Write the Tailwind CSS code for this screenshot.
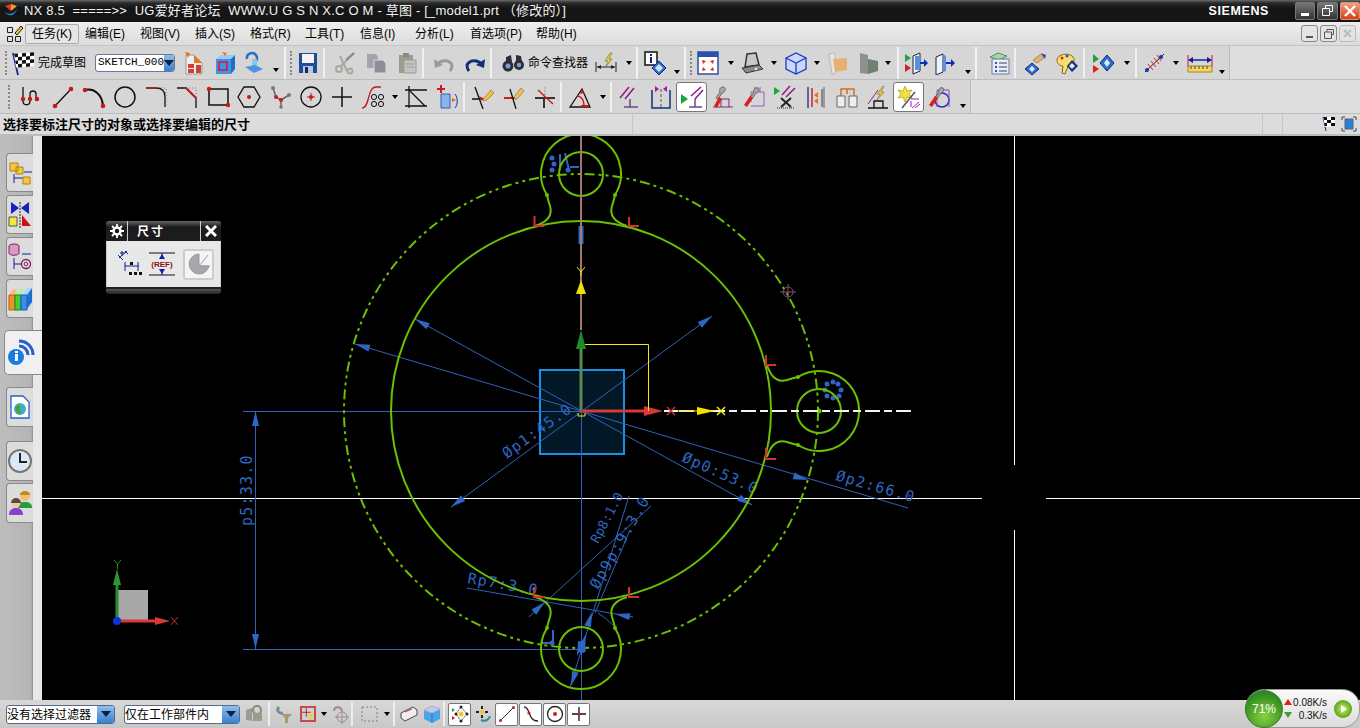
<!DOCTYPE html>
<html>
<head>
    <meta charset="utf-8">
    <title>NX 8.5</title>
    <script src="https://cdn.jsdelivr.net/npm/@tailwindcss/browser@4"></script>
</head>
<body class="w-[1360px] h-[728px] overflow-hidden flex flex-col bg-black text-[12px] text-black font-['Liberation_Sans','Noto_Sans_CJK_SC',sans-serif]">

    <!-- title bar -->
    <div class="h-[22px] flex items-center bg-[linear-gradient(#6a6a6a_0,#2a2a2a_3px,#151515_8px,#151515_100%)] text-[#f2f2f2] shrink-0">
        <svg class="w-4 h-4 ml-[3px]" viewBox="0 0 16 16"><path d="M2 3l6-2 0 7z" fill="#e2342a"/><path d="M8 1l6 2-6 5z" fill="#f0a020"/><path d="M1 8c3 4 9 4 13-2-2 7-9 9-13 2z" fill="#2a7fd8"/></svg>
        <span class="ml-[5px] whitespace-pre text-[13px] tracking-[0.2px]">NX 8.5  =====&gt;&gt;  UG爱好者论坛  WWW.U G S N X.C O M - 草图 - [_model1.prt （修改的）]</span>
        <span class="ml-auto mr-[26px] font-bold text-[12.5px] tracking-[0.6px] text-white">SIEMENS</span>
        <div class="flex gap-[2px] mb-[1px]">
            <div class="w-[20px] h-[18px] rounded-[2px] border border-[#777] bg-[linear-gradient(#777,#333)] flex items-end justify-center pb-[3px]"><i class="w-[8px] h-[3px] bg-white"></i></div>
            <div class="w-[21px] h-[18px] rounded-[2px] border border-[#777] bg-[linear-gradient(#777,#333)] flex items-center justify-center"><svg class="w-[11px] h-[11px]" viewBox="0 0 11 11" fill="none" stroke="#fff"><path d="M3.5 3V.5h7v6H8M.5 3.5h7v7h-7z"/></svg></div>
            <div class="w-[20px] h-[18px] rounded-[2px] border border-[#c98] bg-[linear-gradient(#f0a080,#e03c10)] flex items-center justify-center"><svg class="w-[12px] h-[12px]" viewBox="0 0 12 12" stroke="#fff" stroke-width="2.4"><path d="M1 1l10 10M11 1L1 11"/></svg></div>
        </div>
    </div>

    <!-- menu bar -->
    <div class="h-[24px] flex items-center bg-[linear-gradient(#eeeeee,#dcdcdc)] border-b border-[#c4c4c4] shrink-0">
        <svg class="w-[18px] h-[20px] ml-[6px]" viewBox="0 0 18 20" fill="none" stroke="#222"><path d="M1.500 3.500h5v5h-5zM1.500 12.500h5v5h-5zM9.500 12.500h5v5h-5z"/><path d="M9 9l6-7 2 2-6 7z" fill="#f0c020"/></svg>
        <div class="w-[54px] h-[20px] ml-[1px] flex items-center justify-center rounded-[2px] border border-[#aaa] bg-[#e6e6e6]">任务(K)</div>
        <div class="w-[55px] ml-[6px]">编辑(E)</div>
        <div class="w-[55px]">视图(V)</div>
        <div class="w-[55px]">插入(S)</div>
        <div class="w-[55px]">格式(R)</div>
        <div class="w-[55px]">工具(T)</div>
        <div class="w-[55px]">信息(I)</div>
        <div class="w-[55px]">分析(L)</div>
        <div class="w-[66px]">首选项(P)</div>
        <div class="w-[50px]">帮助(H)</div>
        <div class="ml-auto mr-[4px] flex gap-[2px]">
            <div class="w-[17px] h-[17px] rounded-[3px] border border-[#888] bg-[#e4e4e4] flex items-end justify-center pb-[3px]"><i class="w-[7px] h-[2px] bg-[#555]"></i></div>
            <div class="w-[17px] h-[17px] rounded-[3px] border border-[#888] bg-[#e4e4e4] flex items-center justify-center"><svg class="w-[10px] h-[10px]" viewBox="0 0 10 10" fill="none" stroke="#555"><path d="M3 2.500V.5h6.500v5H8M.5 3h7v6.500h-7z"/></svg></div>
            <div class="w-[17px] h-[17px] rounded-[3px] border border-[#bbb] bg-[#e4e4e4] flex items-center justify-center"><svg class="w-[9px] h-[9px]" viewBox="0 0 9 9" stroke="#bbb" stroke-width="2"><path d="M1 1l7 7M8 1L1 8"/></svg></div>
        </div>
    </div>

    <!-- toolbar row 1 -->
    <div class="h-[34px] flex items-center bg-[#dedede] border-b border-[#bdbdbd] shrink-0">
        <div class="w-[1230px] h-full flex items-center pl-[5px] bg-[#d6d6d6] border-r border-[#bbb]">
            <div class="w-[3px] h-[24px] border-l-2 border-dotted border-[#888]"></div>
            <div class="w-[30px] flex justify-center"><svg class="w-[26px] h-[26px]" viewBox="0 0 26 26"><path d="M3 3l5 22" stroke="#1a2a90" stroke-width="1.800"/><g transform="skewY(-4)"><path d="M4 4h20v14H6z" fill="#fff"/><path d="M4 4h4v3.500H5zM12 4h4v3.500h-4zM20 4h4v3.500h-4zM8 7.500h4V11H8zM16 7.500h4V11h-4zM5 11h3v3.500H6zM12 11h4v3.500h-4zM20 11h4v3.500h-4zM8 14.500h4V18H8zM16 14.500h4V18h-4z" fill="#111"/></g></svg></div>
            <div class="w-[57px]">完成草图</div>
            <div class="w-[80px] h-[18px] rounded-[3px] border border-[#6a7a96] bg-white flex items-center pl-[2px] font-['Liberation_Mono',monospace] text-[11px] overflow-hidden">SKETCH_000<span class="ml-auto w-[15px] h-full bg-[linear-gradient(#8cc0ee,#3a7ed0)] flex items-center justify-center"><i class="border-x-[5px] border-t-[6px] border-x-transparent border-t-[#10203a]"></i></span></div>
            <div class="w-[3px]"></div>
            <div class="w-[31px] flex justify-center"><svg class="w-6 h-6" viewBox="0 0 24 24"><path d="M4 4h8l8 8v11H4z" fill="#eee" stroke="#999"/><path d="M6 13h6v4H6zM14 14h5v8h-5zM6 18h6v4H6z" fill="#d04030"/><path d="M3 1l5 1-2 5zM12 4l8 8h-8z" fill="#e8761a"/></svg></div>
            <div class="w-[31px] flex justify-center"><svg class="w-6 h-6" viewBox="0 0 24 24"><path d="M3 8l5-4h14l-4 4z" fill="#9cc8f4"/><path d="M18 8l4-4v14l-4 5z" fill="#1f6fc8"/><path d="M3 8h15v15H3z" fill="#3d94ea"/><path d="M6 11h8v8H6z" fill="none" stroke="#d81820" stroke-width="1.500"/><path d="M9 1l5 1-2 3z" fill="#e8761a"/></svg></div>
            <div class="w-[28px] flex justify-center"><svg class="w-6 h-6" viewBox="0 0 24 24"><path d="M5 8a5 5 0 1 1 8 3" fill="none" stroke="#2a6fc0" stroke-width="2.500"/><path d="M10 8h5v8h-5z" fill="#8fc0ee"/><path d="M3 16l10-2 8 4-9 4z" fill="#4a94e0"/></svg></div>
            <div class="w-[16px] flex justify-center items-end h-[20px] pb-[1px]"><i class="border-x-[3px] border-t-[4px] border-x-transparent border-t-black"></i></div>
            <div class="w-[6px] h-[32px] border-l-2 border-[#f2f2f2]"></div>
            <div class="w-[3px] h-[24px] border-l-2 border-dotted border-[#888]"></div>
            <div class="w-[30px] flex justify-center"><svg class="w-6 h-6" viewBox="0 0 24 24"><path d="M3 2h18v20H3z" fill="#1e4c96"/><path d="M6 3h12v9H6z" fill="#f4f4f4"/><path d="M7 15h10v7H7z" fill="#b8c8e0"/><path d="M9 16h3v6H9z" fill="#1a2a50"/></svg></div>
            <div class="w-[6px] h-[30px] border-l-2 border-[#f0f0f0]"></div>
            <div class="w-[31px] flex justify-center"><svg class="w-6 h-6" viewBox="0 0 24 24" fill="none" stroke="#a8a8a0" stroke-width="2"><path d="M21 2L8 15M14 20L7 5"/><circle cx="6" cy="18" r="3"/><circle cx="17" cy="20" r="2.500"/><path d="M21 2l-8 7" stroke="#8a8a80"/></svg></div>
            <div class="w-[31px] flex justify-center"><svg class="w-6 h-6" viewBox="0 0 24 24"><path d="M3 3h9l2 3v11H3z" fill="#a4a4ae"/><path d="M10 9h9l3 3v10H10z" fill="#8e8e98" stroke="#ddd"/></svg></div>
            <div class="w-[31px] flex justify-center"><svg class="w-6 h-6" viewBox="0 0 24 24"><path d="M4 4h14v18H4z" fill="#a09a88"/><path d="M8 2h6v4H8z" fill="#888"/><path d="M9 9h12v13H9z" fill="#c4c4c4" stroke="#999"/><path d="M11 13h8M11 16h8" stroke="#999"/></svg></div>
            <div class="w-[6px] h-[30px] border-l-2 border-[#f0f0f0]"></div>
            <div class="w-[31px] flex justify-center"><svg class="w-6 h-6" viewBox="0 0 24 24" fill="none"><path d="M6 13a8 7 0 0 1 14 1c0 3-1 5-2 6" stroke="#9a9a9a" stroke-width="3"/><path d="M2 8l1 9 8-3z" fill="#9a9a9a"/></svg></div>
            <div class="w-[31px] flex justify-center"><svg class="w-6 h-6" viewBox="0 0 24 24" fill="none"><path d="M18 13a8 7 0 0 0-14 1c0 3 1 5 2 6" stroke="#12307a" stroke-width="3"/><path d="M22 8l-1 9-8-3z" fill="#12307a"/></svg></div>
            <div class="w-[8px] h-[30px] border-l-2 border-[#f0f0f0]"></div>
            <div class="w-[30px] flex justify-center"><svg class="w-6 h-6" viewBox="0 0 24 24" fill="#2a2e36"><circle cx="7" cy="15" r="5.500"/><circle cx="18" cy="14" r="5"/><path d="M5 6l5-2 1 7-6 2zM15 4l5 1 1 6-6 1z"/><circle cx="7" cy="15" r="2.500" fill="#7aa0d0"/><circle cx="18" cy="14" r="2.300" fill="#7aa0d0"/></svg></div>
            <div class="w-[63px]">命令查找器</div>
            <div class="w-[30px] flex justify-center"><svg class="w-6 h-6" viewBox="0 0 24 24"><path d="M2 11v10M22 11v10M3 16h18" stroke="#222" fill="none"/><path d="M3 16l4-2v4zM21 16l-4-2v4z" fill="#222"/><path d="M16 2l-5 8h3l-3 7 7-9h-3l3-6z" fill="#f0d020" stroke="#666" stroke-width=".6"/></svg></div>
            <div class="w-[15px] flex justify-center"><i class="border-x-[3px] border-t-[4px] border-x-transparent border-t-black"></i></div>
            <div class="w-[4px] h-[32px] border-l-2 border-[#f2f2f2]"></div>
            <div class="w-[30px] flex justify-center"><svg class="w-6 h-6" viewBox="0 0 24 24"><path d="M2 1h12v13H2z" fill="#fff" stroke="#111" stroke-width="1.500"/><path d="M7 3h2v2H7zM7 6h2v6H7z" fill="#13277a"/><path d="M16 10l7 7-7 7-7-7z" fill="#2a6fd0" stroke="#13277a"/><path d="M16 13l4 4-4 4-4-4z" fill="#cfe4f8"/></svg></div>
            <div class="w-[14px] flex justify-center items-end h-[22px]"><i class="border-x-[3px] border-t-[4px] border-x-transparent border-t-black"></i></div>
            <div class="w-[6px] h-[32px] border-l-2 border-[#f2f2f2]"></div>
            <div class="w-[3px] h-[24px] border-l-2 border-dotted border-[#888]"></div>
            <div class="w-[30px] flex justify-center"><svg class="w-6 h-6" viewBox="0 0 24 24"><path d="M2 1h20v22H2z" fill="#fff" stroke="#2a52a8" stroke-width="1.500"/><path d="M2 1h20v5H2z" fill="#2a52a8"/><path d="M6 9l4 1-3 3zM18 9l-4 1 3 3zM6 20l4-1-3-3zM18 20l-4-1 3-3z" fill="#e03020"/></svg></div>
            <div class="w-[15px] flex justify-center"><i class="border-x-[3px] border-t-[4px] border-x-transparent border-t-black"></i></div>
            <div class="w-[28px] flex justify-center"><svg class="w-6 h-6" viewBox="0 0 24 24"><path d="M7 3l9-1 3 12-14 2z" fill="#c8c8c8" stroke="#333" stroke-width="1.500"/><path d="M2 17l17-3 4 4-17 4z" fill="#8a8a8a" stroke="#333"/><circle cx="16" cy="18" r="1.300" fill="#eee"/></svg></div>
            <div class="w-[16px] flex justify-center"><i class="border-x-[3px] border-t-[4px] border-x-transparent border-t-black"></i></div>
            <div class="w-[28px] flex justify-center"><svg class="w-6 h-6" viewBox="0 0 24 24" fill="#c8d8f8" stroke="#2038c8" stroke-width="1.300"><path d="M2 7l10-5 10 5v11l-10 5-10-5z"/><path d="M2 7l10 5 10-5M12 12v11" fill="none"/></svg></div>
            <div class="w-[14px] flex justify-center"><i class="border-x-[3px] border-t-[4px] border-x-transparent border-t-black"></i></div>
            <div class="w-[26px] flex justify-center"><svg class="w-6 h-6" viewBox="0 0 24 24"><path d="M4 3l6-1 1 20-4 1z" fill="#e4e4e4" stroke="#bbb"/><path d="M8 8l14-1v12l-12 2z" fill="#e8b070"/></svg></div>
            <div class="w-[6px]"></div>
            <div class="w-[26px] flex justify-center"><svg class="w-6 h-6" viewBox="0 0 24 24"><path d="M3 2l8 2v19l-8-1z" fill="#8f8f8f"/><path d="M11 8l10 2v10l-10 3z" fill="#6f8070"/></svg></div>
            <div class="w-[12px] flex justify-center"><i class="border-x-[3px] border-t-[4px] border-x-transparent border-t-black"></i></div>
            <div class="w-[8px] h-[32px] ml-[3px] border-l-2 border-[#f2f2f2]"></div>
            <div class="w-[27px] flex justify-center -ml-[3px]"><svg class="w-6 h-6" viewBox="0 0 24 24"><path d="M1 3l6 4-6 4z" fill="#20a040"/><path d="M1 13l6 4-6 4z" fill="#d82020"/><path d="M9 5l7-3v18l-7 3z" fill="#eef4fc" stroke="#223" /><path d="M11 5h5v14h-5z" fill="#5a90e0"/><path d="M16 11h4V8l4 4-4 4v-3h-4z" fill="#1030b0"/></svg></div>
            <div class="w-[32px] flex justify-center"><svg class="w-6 h-6" viewBox="0 0 24 24"><path d="M3 6l7-3v18l-7 3z" fill="#eef4fc" stroke="#223"/><path d="M10 3l3 2v15l-3 1z" fill="#5a90e0"/><path d="M13 11h5V8l4 4-4 4v-3h-5z" fill="#1030b0"/></svg></div>
            <div class="w-[14px] flex justify-center items-end h-[22px]"><i class="border-x-[3px] border-t-[4px] border-x-transparent border-t-black"></i></div>
            <div class="w-[8px] h-[32px] border-l-2 border-[#f2f2f2]"></div>
            <div class="w-[31px] flex justify-center"><svg class="w-6 h-6" viewBox="0 0 24 24"><path d="M3 6l8-4 9 3-8 4z" fill="#a8d8a0" stroke="#587"/><path d="M5 8h17v15H5z" fill="#e8eef8" stroke="#6a7aa0"/><path d="M8 11h2v2H8zM8 15h2v2H8zM8 19h2v2H8z" fill="#2a5ab0"/><path d="M12 12h8M12 16h8M12 20h8" stroke="#345"/></svg></div>
            <div class="w-[6px] h-[30px] border-l-2 border-[#f0f0f0]"></div>
            <div class="w-[31px] flex justify-center"><svg class="w-6 h-6" viewBox="0 0 24 24"><path d="M9 9l8-6 3 4-7 5z" fill="#e8b070" stroke="#a86"/><path d="M17 2l5 2-1 4z" fill="#2a4ab0"/><path d="M8 12l7 6-7 6-7-6z" fill="#2a6fd0" stroke="#13277a"/><path d="M8 15l3 3-3 3-3-3z" fill="#dcecfa"/></svg></div>
            <div class="w-[32px] flex justify-center"><svg class="w-6 h-6" viewBox="0 0 24 24"><path d="M2 9c0-6 12-8 16-3 3 4 0 9-5 9l-3 8-3-1 1-7C5 15 2 13 2 9z" fill="#f8e070" stroke="#8a6a10"/><circle cx="7" cy="7" r="1.500" fill="#d02020"/><circle cx="12" cy="5" r="1.500" fill="#3050c0"/><path d="M17 9l6 6-6 6-5-6z" fill="#1a2a70"/><path d="M17 12l3 3-3 3-3-3z" fill="#dcecfa"/></svg></div>
            <div class="w-[5px] h-[30px] border-l-2 border-[#f0f0f0]"></div>
            <div class="w-[30px] flex justify-center"><svg class="w-6 h-6" viewBox="0 0 24 24"><path d="M2 3l6 5-6 4z" fill="#20a040"/><path d="M2 14l6 4-6 4z" fill="#d82020"/><path d="M16 4l7 8-7 8-7-8z" fill="#2a6fd0" stroke="#13277a"/><path d="M16 8l3 4-3 4-3-4z" fill="#dcecfa"/></svg></div>
            <div class="w-[17px] flex justify-center"><i class="border-x-[3px] border-t-[4px] border-x-transparent border-t-black"></i></div>
            <div class="w-[4px] h-[30px] border-l-2 border-[#f0f0f0]"></div>
            <div class="w-[30px] flex justify-center"><svg class="w-6 h-6" viewBox="0 0 24 24" stroke="#d02a20" fill="none"><path d="M3 21L22 3" stroke="#222"/><path d="M6 13l5 6M9 10l5 6M12 7l5 6M15 4l4 6"/><circle cx="5" cy="19" r="2" fill="#1a30c0" stroke="none"/><circle cx="19" cy="6" r="2" fill="#1a30c0" stroke="none"/></svg></div>
            <div class="w-[14px] flex justify-center"><i class="border-x-[3px] border-t-[4px] border-x-transparent border-t-black"></i></div>
            <div class="w-[34px] flex justify-center"><svg class="w-[26px] h-6" viewBox="0 0 26 24"><path d="M1 4v12M25 4v12" stroke="#c01818"/><path d="M2 9h22" stroke="#1020a0" stroke-width="1.500"/><path d="M1 9l5-3v6zM25 9l-5-3v6z" fill="#1020a0"/><path d="M1 15h24v6H1z" fill="#f0d860" stroke="#a08820"/><path d="M4 15v3M8 15v3M12 15v3M16 15v3M20 15v3" stroke="#444"/></svg></div>
            <div class="w-[9px] flex justify-center items-end h-[22px]"><i class="border-x-[3px] border-t-[4px] border-x-transparent border-t-black"></i></div>
        </div>
    </div>

    <!-- toolbar row 2 -->
    <div class="h-[34px] flex items-center bg-[#dedede] border-b border-[#bdbdbd] shrink-0">
        <div class="w-[971px] h-full flex items-center pl-[8px] bg-[#d6d6d6] border-r border-[#bbb]">
            <div class="w-[9px] h-[24px] border-l-2 border-dotted border-[#888]"></div>
            <div class="w-[31px] flex justify-center"><svg class="w-6 h-6" viewBox="0 0 24 24" fill="none" stroke="#111" stroke-width="1.300"><path d="M3 2v14c0 5 7 5 7 0V9c0-4 6-4 6 0v7"/><g fill="#c81818" stroke="none"><circle cx="3" cy="14" r="2.200"/><circle cx="10" cy="14" r="2.200"/><circle cx="17" cy="14" r="2.200"/></g></svg></div>
            <div class="w-[31px] flex justify-center"><svg class="w-6 h-6" viewBox="0 0 24 24"><path d="M4 21L20 4" stroke="#111" stroke-width="1.300"/><circle cx="4" cy="21" r="2.300" fill="#c81818"/><circle cx="20" cy="4" r="2.300" fill="#c81818"/></svg></div>
            <div class="w-[31px] flex justify-center"><svg class="w-6 h-6" viewBox="0 0 24 24"><path d="M3 5c9-2 17 4 18 16" stroke="#111" stroke-width="2" fill="none"/><circle cx="3" cy="5" r="2.300" fill="#c81818"/><circle cx="21" cy="21" r="2.300" fill="#c81818"/></svg></div>
            <div class="w-[31px] flex justify-center"><svg class="w-6 h-6" viewBox="0 0 24 24"><circle cx="12" cy="12" r="10" fill="none" stroke="#111" stroke-width="1.500"/></svg></div>
            <div class="w-[31px] flex justify-center"><svg class="w-6 h-6" viewBox="0 0 24 24" fill="none"><path d="M2 3h10c6 0 9 3 9 9v10" stroke="#111" stroke-width="1.300"/><path d="M2 3h20v19" stroke="#777" stroke-dasharray="1 2"/><path d="M2 3h10" stroke="#c81818"/></svg></div>
            <div class="w-[31px] flex justify-center"><svg class="w-6 h-6" viewBox="0 0 24 24" fill="none"><path d="M2 3h9l10 10v10" stroke="#111" stroke-width="1.300"/><path d="M11 3l10 10" stroke="#c81818" stroke-width="2"/><path d="M11 3h10v10" stroke="#777" stroke-dasharray="1 2"/></svg></div>
            <div class="w-[31px] flex justify-center"><svg class="w-6 h-6" viewBox="0 0 24 24"><path d="M3 4h19v16H3z" fill="none" stroke="#111" stroke-width="1.500"/><circle cx="3" cy="4" r="2.200" fill="#c81818"/><circle cx="22" cy="20" r="2.200" fill="#c81818"/></svg></div>
            <div class="w-[31px] flex justify-center"><svg class="w-6 h-6" viewBox="0 0 24 24"><path d="M7 2h10l6 10-6 10H7L1 12z" fill="none" stroke="#111" stroke-width="1.300"/><circle cx="12" cy="12" r="2" fill="#c81818"/></svg></div>
            <div class="w-[31px] flex justify-center"><svg class="w-6 h-6" viewBox="0 0 24 24"><path d="M5 3l3 9 5 3 8-5M13 15l0 7" stroke="#666" stroke-width="1.500" fill="none"/><circle cx="5" cy="3" r="2" fill="#777"/><circle cx="8" cy="12" r="2" fill="#c81818"/><circle cx="13" cy="15" r="2" fill="#c81818"/><circle cx="21" cy="10" r="2" fill="#777"/><circle cx="13" cy="22" r="1.800" fill="#777"/></svg></div>
            <div class="w-[31px] flex justify-center"><svg class="w-6 h-6" viewBox="0 0 24 24"><circle cx="12" cy="12" r="10" fill="none" stroke="#111" stroke-width="1.300"/><path d="M12 8v8M8 12h8" stroke="#c81818"/><circle cx="12" cy="12" r="2" fill="#c81818"/></svg></div>
            <div class="w-[31px] flex justify-center"><svg class="w-6 h-6" viewBox="0 0 24 24"><path d="M12 2v20M2 12h20" stroke="#111" stroke-width="1.500"/></svg></div>
            <div class="w-[31px] flex justify-center"><svg class="w-6 h-6" viewBox="0 0 24 24" fill="none"><path d="M1 23c8 0 5-21 14-21h5" stroke="#c81818" stroke-width="1.300"/><g stroke="#111"><circle cx="13" cy="12" r="2.600"/><circle cx="20" cy="12" r="2.600"/><circle cx="13" cy="19" r="2.600"/><circle cx="20" cy="19" r="2.600"/></g></svg></div>
            <div class="w-[12px] flex justify-center"><i class="border-x-[3px] border-t-[4px] border-x-transparent border-t-black"></i></div>
            <div class="w-[31px] flex justify-center"><svg class="w-6 h-6" viewBox="0 0 24 24" fill="none" stroke="#111" stroke-width="1.300"><path d="M1 5h22M5 1v22M1 21h22"/><path d="M5 5l16 16" /></svg></div>
            <div class="w-[31px] flex justify-center"><svg class="w-6 h-6" viewBox="0 0 24 24"><path d="M6 0v8M2 4h8" stroke="#d81818" stroke-width="2"/><path d="M6 9h9v14H6z" fill="#8ab4ec" stroke="#3a5ea8"/><path d="M17 13l4 2-4 2z" fill="#e86a18"/><path d="M20 9c3 4 3 10 0 14" stroke="#2030a0" fill="none"/></svg></div>
            <div class="w-[5px] h-[30px] border-l-2 border-[#f0f0f0]"></div>
            <div class="w-[31px] flex justify-center"><svg class="w-6 h-6" viewBox="0 0 24 24"><path d="M4 2l8 22M1 14h14" stroke="#111" stroke-width="1.300"/><path d="M13 13l7-8 3 3-7 7-4 1z" fill="#f4c040" stroke="#a86"/><path d="M8 11l4 2-2 3z" fill="#d81818"/></svg></div>
            <div class="w-[31px] flex justify-center"><svg class="w-6 h-6" viewBox="0 0 24 24"><path d="M2 13h12M8 4l6 20" stroke="#111" stroke-width="1.300"/><path d="M12 12l7-9 3 3-8 9z" fill="#f4c040" stroke="#a86"/><path d="M2 13h7" stroke="#d81818" stroke-width="2"/></svg></div>
            <div class="w-[31px] flex justify-center"><svg class="w-6 h-6" viewBox="0 0 24 24"><path d="M2 13h20M11 13v10" stroke="#333" stroke-width="2"/><path d="M12 2v9" stroke="#999" stroke-dasharray="2 1"/><path d="M5 5l15 14" stroke="#d81818" stroke-width="1.500"/></svg></div>
            <div class="w-[4px] h-[30px] border-l-2 border-[#f0f0f0]"></div>
            <div class="w-[31px] flex justify-center"><svg class="w-6 h-6" viewBox="0 0 24 24" fill="none"><path d="M2 22L14 4l8 18z" stroke="#111" stroke-width="1.300"/><path d="M9 11c4 0 7 4 7 9" stroke="#c81818" stroke-width="1.500"/><path d="M14 4l-2 5 4-1z" fill="#c81818"/><path d="M13 21h8" stroke="#c81818" stroke-width="2"/></svg></div>
            <div class="w-[15px] flex justify-center"><i class="border-x-[3px] border-t-[4px] border-x-transparent border-t-black"></i></div>
            <div class="w-[4px] h-[30px] border-l-2 border-[#f0f0f0]"></div>
            <div class="w-[31px] flex justify-center"><svg class="w-6 h-6" viewBox="0 0 24 24"><path d="M2 13L11 2M7 14L16 3" stroke="#8a1a88" stroke-width="1.500"/><path d="M12 14v8M6 22h14" stroke="#6a4a8a" stroke-width="1.500"/></svg></div>
            <div class="w-[31px] flex justify-center"><svg class="w-6 h-6" viewBox="0 0 24 24"><path d="M3 5v18h18V5" fill="none" stroke="#12307a" stroke-width="1.500"/><path d="M12 4v19" stroke="#555" stroke-dasharray="3 2"/><path d="M6 1l4 3-4 3zM18 1l-4 3 4 3z" fill="#b010b0"/></svg></div>
            <div class="w-[31px] h-[30px] flex items-center justify-center rounded-[3px] border border-[#777] bg-white"><svg class="w-6 h-6" viewBox="0 0 24 24"><path d="M1 9l7 5-7 5z" fill="#18a838"/><path d="M11 11L21 2M15 14L23 5" stroke="#8a1a88" stroke-width="1.500"/><path d="M15 14v8M9 22h13" stroke="#6a4a8a" stroke-width="1.500"/></svg></div>
            <div class="w-[31px] flex justify-center"><svg class="w-6 h-6" viewBox="0 0 24 24"><path d="M10 14V22M2 22h20M10 14h8v8" stroke="#7a2a7a" fill="none"/><path d="M12 2c4 0 2 6-1 6l-4 6-2-1 4-6c-1-2 0-5 3-5z" fill="#aaa" stroke="#666"/><path d="M3 21l5-9 3 2-5 9z" fill="#d82020"/></svg></div>
            <div class="w-[31px] flex justify-center"><svg class="w-6 h-6" viewBox="0 0 24 24"><path d="M9 17V7h13v14H9M13 2v6M18 2v5" stroke="#9a5ac0" fill="none"/><path d="M16 3c2 1 0 5-2 5l-4 6-2-1 4-6c-1-2 1-5 4-4z" fill="#aaa" stroke="#666"/><path d="M2 20l6-9 3 2-6 9z" fill="#d82020"/></svg></div>
            <div class="w-[31px] flex justify-center"><svg class="w-6 h-6" viewBox="0 0 24 24"><path d="M1 2l6 4-6 4z" fill="#18a838"/><path d="M9 10L17 1M13 12L22 3" stroke="#8a1a88" stroke-width="1.500"/><path d="M8 13l10 9M18 13L8 22" stroke="#222" stroke-width="2"/><path d="M4 23h18" stroke="#222" stroke-dasharray="1 1"/></svg></div>
            <div class="w-[31px] flex justify-center"><svg class="w-6 h-6" viewBox="0 0 24 24"><path d="M4 2v21M20 2v21" stroke="#888" stroke-width="1.500"/><path d="M4 2v21" stroke="#2030a0"/><path d="M8 3v19" stroke="#d02020" stroke-width="1.500"/><path d="M14 7l-4 3 4 3zM14 13l-4 3 4 3z" fill="#e87020"/><path d="M18 4v18" stroke="#888" stroke-width="2"/></svg></div>
            <div class="w-[31px] flex justify-center"><svg class="w-6 h-6" viewBox="0 0 24 24" fill="#eee" stroke="#666"><path d="M2 11h8v11H2zM14 11h8v11h-8z"/><path d="M6 11V4h6v5M12 4h7v7" fill="none" stroke="#d07020" stroke-width="1.500"/></svg></div>
            <div class="w-[31px] flex justify-center"><svg class="w-6 h-6" viewBox="0 0 24 24"><path d="M2 23h20M8 23V16h9v7" stroke="#111" fill="none" stroke-width="1.300"/><path d="M2 19L12 5" stroke="#7a2a7a"/><path d="M17 1l-6 8h3l-3 6 7-8h-3l3-6z" fill="#f0d020" stroke="#666" stroke-width=".6"/></svg></div>
            <div class="w-[31px] h-[30px] flex items-center justify-center rounded-[3px] border border-[#777] bg-white"><svg class="w-6 h-6" viewBox="0 0 24 24"><path d="M8 1l2 5 5-1-3 4 3 4-5-1-2 5-2-5-5 1 3-4-3-4 5 1z" fill="#f4e040" stroke="#b09a10" stroke-width=".7"/><path d="M5 23L18 7" stroke="#555" stroke-width="1.500"/><path d="M14 16v6M14 14h8M15 23l7-6M18 23l5-4" stroke="#b010b0"/></svg></div>
            <div class="w-[31px] flex justify-center"><svg class="w-6 h-6" viewBox="0 0 24 24"><circle cx="14" cy="15" r="7" fill="none" stroke="#2030c0" stroke-width="1.500"/><path d="M9 22V5h12v17M13 2v4" stroke="#a040b0" fill="none"/><path d="M15 3c2 1 0 5-2 5l-4 6-2-1 4-6c-1-2 1-5 4-4z" fill="#aaa" stroke="#666"/><path d="M1 20l6-9 3 2-6 9z" fill="#d82020"/></svg></div>
            <div class="w-[15px] flex justify-center items-end h-[22px]"><i class="border-x-[3px] border-t-[4px] border-x-transparent border-t-black"></i></div>
        </div>
    </div>

    <!-- status line -->
    <div class="h-[22px] flex items-center bg-[#dcdcdc] border-b-2 border-[#bcbcbc] shrink-0">
        <div class="w-[632px] pl-[3px] font-bold text-[13px] font-['Noto_Sans_CJK_SC',sans-serif]">选择要标注尺寸的对象或选择要编辑的尺寸</div>
        <div class="w-[630px] h-full border-l border-[#c6c6c6]"></div>
        <div class="w-[20px] h-full border-l border-[#c6c6c6]"></div>
        <div class="flex-1 h-full border-l border-[#c6c6c6] flex items-center justify-end gap-[5px] pr-[3px]">
            <svg class="w-4 h-4" viewBox="0 0 16 16"><path d="M3 1l3 14" stroke="#1a2a90"/><path d="M3 1l12 0 0 9-10 1z" fill="#fff"/><path d="M3 1h4v3H4zM11 1h4v3h-4zM7 4h4v3H7zM4 7h3v3H5zM11 7h4v3h-4z" fill="#111"/></svg>
            <svg class="w-4 h-4" viewBox="0 0 16 16"><path d="M4 3h8v10H4z" fill="#2a7fd8" stroke="#567"/><path d="M1 4V1h3M12 1h3v3M15 12v3h-3M4 15H1v-3" fill="none" stroke="#444"/></svg>
        </div>
    </div>

    <!-- work area -->
    <div class="flex-1 flex min-h-0 relative">
        <div class="w-[42px] h-full shrink-0 pt-[17px] bg-[linear-gradient(to_right,#bebebe_0,#b4b4b4_31px,#8c8c8c_33px,#e8e8e8_33px)]">
            <div class="w-[27px] h-[39px] ml-[6px] flex items-center justify-center rounded-l-[4px] border border-r-0 border-[#8a8a8a] bg-[#dcdcdc]"><svg class="w-[24px] h-[26px]" viewBox="0 0 24 26"><path d="M2 3h8v8H2zM8 7h7v7H8z" fill="#f4c840" stroke="#b08010"/><path d="M16 12h8M6 14v9M6 18h10" stroke="#12209a" fill="none"/><path d="M15 17h7v7h-7z" fill="#f4c840" stroke="#b08010"/></svg></div>
            <div class="w-[27px] h-[39px] ml-[6px] mt-[3px] flex items-center justify-center rounded-l-[4px] border border-r-0 border-[#8a8a8a] bg-[#dcdcdc]"><svg class="w-[24px] h-[28px]" viewBox="0 0 24 28"><path d="M3 1l8 6-8 6zM21 1l-8 6 8 6z" fill="#1420c0"/><path d="M12 1v26" stroke="#222" stroke-dasharray="2 1"/><path d="M1 16h8v9H1z" fill="#f0e840" stroke="#555"/><path d="M14 14l9 11h-9z" fill="#d01010"/></svg></div>
            <div class="w-[27px] h-[39px] ml-[6px] mt-[3px] flex items-center justify-center rounded-l-[4px] border border-r-0 border-[#8a8a8a] bg-[#dcdcdc]"><svg class="w-[24px] h-[28px]" viewBox="0 0 24 28" fill="none"><ellipse cx="6" cy="3" rx="5" ry="2" fill="#d89ac0" stroke="#802060"/><path d="M1 3v7c0 3 10 3 10 0V3" fill="#d89ac0" stroke="#802060"/><path d="M14 11h9M6 15v11M6 21h8" stroke="#12209a"/><circle cx="18" cy="21" r="4.500" stroke="#802060" stroke-width="1.300"/><circle cx="18" cy="21" r="1.800" stroke="#802060"/></svg></div>
            <div class="w-[27px] h-[39px] ml-[6px] mt-[3px] flex items-center justify-center rounded-l-[4px] border border-r-0 border-[#8a8a8a] bg-[#dcdcdc]"><svg class="w-[24px] h-[24px]" viewBox="0 0 24 24"><path d="M1 8l4-6h4L7 8z" fill="#f8c080"/><path d="M1 8h6v15H1z" fill="#f09030" stroke="#c05a00"/><path d="M7 8l5-6h4l-3 6z" fill="#b0f0a0"/><path d="M7 8h6v15H7z" fill="#40d030" stroke="#188a10"/><path d="M13 8l6-7h5l-5 7z" fill="#b0d8ff"/><path d="M13 8h6v15h-6z" fill="#3a90e8" stroke="#1a5aa8"/><path d="M19 8l5-7v14l-5 7z" fill="#1e6ed0"/></svg></div>
            <div class="w-[38px] h-[45px] ml-[4px] mt-[12px] flex items-center pl-[2px] rounded-l-[5px] border border-r-0 border-[#8a8a8a] bg-[#f0f0f0]"><svg class="w-[28px] h-[28px]" viewBox="0 0 28 28" fill="none"><path d="M12 2c8 0 14 6 14 14M12 7c5 0 9 4 9 9" stroke="#2a5ec8" stroke-width="3"/><circle cx="9" cy="18" r="8" fill="#1a7ce0"/><path d="M8 12h3v2H8zM8 15h3v7H8z" fill="#fff"/></svg></div>
            <div class="w-[27px] h-[40px] ml-[6px] mt-[12px] flex items-center justify-center rounded-l-[4px] border border-r-0 border-[#8a8a8a] bg-[#dcdcdc]"><svg class="w-[20px] h-[24px]" viewBox="0 0 20 24"><path d="M1 1h12l6 6v16H1z" fill="#fff" stroke="#2a5ec8" stroke-width="1.300"/><circle cx="10" cy="14" r="6" fill="#3ab0c8"/><path d="M6 11c3-2 5 0 4 3s2 3 0 5c-3 0-5-4-4-8z" fill="#50a030"/></svg></div>
            <div class="w-[27px] h-[40px] ml-[6px] mt-[14px] flex items-center justify-center rounded-l-[4px] border border-r-0 border-[#8a8a8a] bg-[#dcdcdc]"><svg class="w-[24px] h-[24px]" viewBox="0 0 24 24"><circle cx="12" cy="12" r="11" fill="#dbe8f8" stroke="#777" stroke-width="2"/><path d="M11 4h2v8h6v2h-8z" fill="#222"/></svg></div>
            <div class="w-[27px] h-[40px] ml-[6px] mt-[2px] flex items-center justify-center rounded-l-[4px] border border-r-0 border-[#8a8a8a] bg-[#dcdcdc]"><svg class="w-[25px] h-[26px]" viewBox="0 0 25 26"><circle cx="17" cy="6" r="5" fill="#f0c070"/><path d="M17 1a5 4 0 0 1 5 4H12a5 4 0 0 1 5-4z" fill="#c08a20"/><path d="M10 18c0-5 3-6 7-6s7 1 7 6z" fill="#2a9a3a"/><circle cx="8" cy="13" r="4.500" fill="#f0c8a0"/><path d="M8 8a5 5 0 0 1 5 5H3a5 5 0 0 1 5-5z" fill="#5a4a40"/><path d="M1 25c0-5 3-7 7-7s7 2 7 7z" fill="#8a40c8"/></svg></div>
        </div>

        <!-- sketch view -->
        <svg class="block flex-1 h-full bg-black" viewBox="42 136 1318 564" width="1318" height="564" fill="none" font-family="'DejaVu Sans Mono',monospace">
            <defs>
                <path id="ah" d="M0 0L-15-3.500V3.500Z" fill="#2f66c4"/>
                <g id="lug" stroke="#6cc000" stroke-width="2">
                    <circle r="22"/>
                    <path d="M-46 52Q-27 46-31 32Q-33 26-34 21A40 40 0 1 1 34 21Q33 26 31 32Q27 46 46 52"/>
                    <circle cx="-34" cy="21" r="2" fill="#6cc000" stroke="none"/>
                    <circle cx="34" cy="21" r="2" fill="#6cc000" stroke="none"/>
                </g>
            </defs>

            <!-- crosshair -->
            <path d="M1014.500 136V465M1014.500 530V700M42 498.500H982M1046 498.500H1360" stroke="#fff"/>

            <!-- datum square -->
            <rect x="540" y="370" width="84" height="84" fill="#021826" stroke="#1a8fe6" stroke-width="2"/>

            <!-- blue dimension lines -->
            <g stroke="#2f62b8">
                <path d="M243 411.500H581M581.500 411V700M243 649.500H582M255.500 411V649"/>
                <path d="M712 316L451 507M415 319L752 505M355 344L908 508"/>
                <path d="M467 588L633 617M529 617L651 506M629 496L570 687M630 530L595 613M598 613Q606 618 613 625"/>
            </g>
            <path d="M581 226V244" stroke="#2f66c4" stroke-width="5"/>
            <path d="M553 630V643M541 643H553M560 154V170M565 153L569 170M570 167H579" stroke="#2f66c4" stroke-width="2"/>
            <g fill="#2f66c4">
                <circle cx="552" cy="158" r="2.500"/><circle cx="554" cy="164" r="2.500"/><circle cx="552" cy="170" r="2.500"/><circle cx="568" cy="170" r="2.500"/><circle cx="552" cy="643" r="2.500"/>
                <circle cx="827" cy="384" r="2.500"/><circle cx="833" cy="382" r="2.500"/><circle cx="838" cy="384" r="2.500"/><circle cx="841" cy="390" r="2.500"/><circle cx="839" cy="396" r="2.500"/><circle cx="833" cy="398" r="2.500"/><circle cx="827" cy="396" r="2.500"/><circle cx="825" cy="390" r="2.500"/>
            </g>
            <use href="#ah" transform="translate(255.500 411) rotate(-90)"/>
            <use href="#ah" transform="translate(255.500 649) rotate(90)"/>
            <use href="#ah" transform="translate(712 316) rotate(-36)"/>
            <use href="#ah" transform="translate(451 507) rotate(144)"/>
            <use href="#ah" transform="translate(415 319) rotate(209)"/>
            <use href="#ah" transform="translate(752 505) rotate(29)"/>
            <use href="#ah" transform="translate(355 344) rotate(196)"/>
            <use href="#ah" transform="translate(808 480) rotate(16)"/>
            <use href="#ah" transform="translate(571 686) rotate(107)"/>
            <use href="#ah" transform="translate(577 656) rotate(107)"/>
            <use href="#ah" transform="translate(592 612) rotate(-73)"/>
            <use href="#ah" transform="translate(586 634) rotate(-73)"/>
            <use href="#ah" transform="translate(545 602) rotate(-42)"/>
            <use href="#ah" transform="translate(615 614) rotate(190)"/>

            <!-- dimension texts -->
            <g fill="#2f66c4" font-size="15" letter-spacing="1.200">
                <text transform="translate(252 526) rotate(-90)">p5:33.0</text>
                <text transform="translate(507 459) rotate(-36)">Øp1:45.0</text>
                <text transform="translate(681 461) rotate(24)">Øp0:53.0</text>
                <text transform="translate(835 480) rotate(16)">Øp2:66.0</text>
                <text transform="translate(467 583) rotate(10)">Rp7:3.0</text>
                <text transform="translate(598 590) rotate(-60)" letter-spacing="1.400">Øp9p:9:3.0</text>
                <text transform="translate(598 544) rotate(-62)" font-size="13" letter-spacing="0">Rp8:1.0</text>
            </g>

            <!-- sketch geometry -->
            <circle cx="581" cy="411" r="190" stroke="#6cc000" stroke-width="2"/>
            <circle cx="581" cy="411" r="237" stroke="#6cc000" stroke-width="2" stroke-dasharray="10 4 3 4 3 4"/>
            <use href="#lug" transform="translate(581 174)"/>
            <use href="#lug" transform="translate(819 411) rotate(90)"/>
            <use href="#lug" transform="translate(581 649) rotate(180)"/>
            <circle cx="819" cy="411" r="2.500" fill="#6cc000"/>
            <circle cx="582" cy="649" r="4" fill="#2f66c4"/>

            <!-- constraint marks -->
            <path d="M534.500 216V226H544M629 217V226H639M766 355V365H776M766 448V459H776M534 587V597H545M629 587V597H639" stroke="#d83030" stroke-width="2"/>
            <circle cx="788" cy="292" r="5" stroke="#2f66c4"/>
            <path d="M788 284V300M780 292H796" stroke="#c04040"/>

            <!-- wcs -->
            <path d="M581 136V330" stroke="#a07a70" stroke-width="2"/>
            <path d="M581 411V345" stroke="#5a8a50" stroke-width="3"/>
            <path d="M581 330L576 349H586Z" fill="#1f8a2a"/>
            <path d="M664 411H678" stroke="#f4f4f4" stroke-width="2"/>
            <path d="M679 411H911" stroke="#f4f4f4" stroke-width="2" stroke-dasharray="15 4 8 4"/>
            <path d="M581 411H645" stroke="#d83838" stroke-width="3"/>
            <path d="M663 411L644 406V416Z" fill="#d83838"/>
            <path d="M667 407L675 415M675 407L667 415" stroke="#c83030" stroke-width="1.500"/>
            <path d="M585 344.500H648.500V411" stroke="#f0f000"/>
            <path d="M677 411H700" stroke="#f0f000"/>
            <path d="M715 411L697 407V415Z" fill="#f0e000"/>
            <path d="M717 407L725 415M725 407L717 415" stroke="#f0f000" stroke-width="1.500"/>
            <path d="M578 413V416H585V413" stroke="#f0f000"/>
            <path d="M581 280L576 294H586Z" fill="#f0e000"/>
            <path d="M577 267L581 272L585 267M581 272V276" stroke="#f0f000"/>

            <!-- triad -->
            <rect x="117" y="590" width="31" height="31" fill="#a8a8a8"/>
            <path d="M117 621V585" stroke="#2a8a30" stroke-width="3"/>
            <path d="M117 569L113 585H121Z" fill="#2a9a30"/>
            <path d="M117 621H157" stroke="#d83838" stroke-width="3"/>
            <path d="M170 621L155 617V625Z" fill="#d83838"/>
            <circle cx="117" cy="621" r="4" fill="#1030d8"/>
            <path d="M171 617L178 625M178 617L171 625" stroke="#b83030"/>
            <path d="M114 560L117.500 564L121 560M117.500 564V569" stroke="#2a8a30"/>
        </svg>

        <!-- floating palette -->
        <div class="absolute left-[106px] top-[85px] w-[115px] rounded-[3px] overflow-hidden">
            <div class="h-[20px] flex items-center bg-[linear-gradient(#666,#1c1c1c_6px)] text-white font-bold">
                <div class="w-[21px] flex justify-center"><svg class="w-[14px] h-[14px]" viewBox="0 0 14 14" fill="none" stroke="#fff"><circle cx="7" cy="7" r="3.500" stroke-width="2.500"/><path d="M7 0v3M7 11v3M0 7h3M11 7h3M2 2l2 2M10 10l2 2M12 2l-2 2M4 10l-2 2" stroke-width="1.800"/></svg></div>
                <div class="w-[74px] h-full border-x border-[#ccc] pl-[9px] flex items-center font-['Noto_Sans_CJK_SC',sans-serif] tracking-[2px]">尺寸</div>
                <div class="flex-1 flex justify-center"><svg class="w-[12px] h-[12px]" viewBox="0 0 12 12" stroke="#fff" stroke-width="3"><path d="M1 1l10 10M11 1L1 11"/></svg></div>
            </div>
            <div class="h-[46px] flex items-center bg-[#e8e8e8] pl-[10px] border-x border-[#ccc]">
                <svg class="w-[28px] h-[28px]" viewBox="0 0 28 28" fill="none" stroke="#12209a"><path d="M2 8L10 1M1 5l5 5M8 1l3 3M3 3h5M5 1v5"/><path d="M8 16h14M8 12v9M21 12v9"/><path d="M13 12h3v3h-3zM12 22h3v3h-3zM17 22h3v3h-3zM22 22h3v3h-3z" fill="#111" stroke="none"/></svg>
                <svg class="w-[28px] h-[28px] ml-[3px]" viewBox="0 0 28 28" fill="none"><path d="M1 3h26M1 25h26" stroke="#111"/><path d="M14 3v5M14 20v5" stroke="#12209a"/><path d="M14 4l-3 5h6zM14 24l-3-5h6z" fill="#12209a"/><text x="14" y="17" text-anchor="middle" font-size="8" font-weight="700" fill="#8a1010" font-family="'Liberation Sans',sans-serif">(REF)</text></svg>
                <div class="ml-[7px] w-[31px] h-[31px] rounded-[3px] border-2 border-[#ccc] bg-[#f4f4f4] flex items-center justify-center"><svg class="w-[24px] h-[24px]" viewBox="0 0 24 24"><path d="M12 2a10 10 0 1 0 10 12H12z" fill="#a8a8a8" stroke="#999"/><path d="M12 14L21 3M12 14h11" stroke="#9a9ab8"/></svg></div>
            </div>
            <div class="h-[7px] border-t-2 border-[#222] bg-[linear-gradient(#555,#222)]"></div>
        </div>
    </div>

    <!-- selection bar -->
    <div class="h-[28px] flex items-center bg-[linear-gradient(#d8d8d8,#c8c8c8)] pl-[6px] shrink-0">
        <div class="w-[109px] h-[19px] rounded-[3px] border border-[#5a6a86] bg-white flex items-center overflow-hidden font-['Noto_Sans_CJK_SC',sans-serif]">没有选择过滤器<span class="ml-auto w-[17px] h-full bg-[linear-gradient(#8cc0ee,#3a7ed0)] flex items-center justify-center"><i class="border-x-[5px] border-t-[6px] border-x-transparent border-t-[#10203a]"></i></span></div>
        <div class="w-[116px] h-[19px] ml-[9px] rounded-[3px] border border-[#5a6a86] bg-white flex items-center overflow-hidden font-['Noto_Sans_CJK_SC',sans-serif]">仅在工作部件内<span class="ml-auto w-[17px] h-full bg-[linear-gradient(#8cc0ee,#3a7ed0)] flex items-center justify-center"><i class="border-x-[5px] border-t-[6px] border-x-transparent border-t-[#10203a]"></i></span></div>
        <div class="w-[28px] flex justify-center"><svg class="w-[20px] h-[20px]" viewBox="0 0 20 20" fill="#9a9a9a"><path d="M2 6l6-2v13l-6-1z"/><circle cx="13" cy="6" r="4" fill="none" stroke="#8a8a7a" stroke-width="2"/><path d="M9 9h9v8H9z" fill="#a09a88"/></svg></div>
        <div class="w-[5px] h-[24px] border-l-2 border-[#eee]"></div>
        <div class="w-[24px] flex justify-center"><svg class="w-[20px] h-[20px]" viewBox="0 0 20 20"><path d="M4 3c-3 3 0 7 4 6" fill="none" stroke="#7a8a9a" stroke-width="3"/><path d="M6 10h11l-4 4v5H10v-5z" fill="#a89a70"/></svg></div>
        <div class="w-[16px] h-[16px] mx-[3px] border-2 border-[#c84850] flex items-center justify-center"><svg class="w-[14px] h-[14px]" viewBox="0 0 14 14"><path d="M5 0v10M0 5h10" stroke="#a01818"/><path d="M6 7h8l-3 3v4H9v-4z" fill="#f0d020"/></svg></div>
        <div class="w-[9px] flex justify-center"><i class="border-x-[3px] border-t-[4px] border-x-transparent border-t-black"></i></div>
        <div class="w-[23px] flex justify-center"><svg class="w-[20px] h-[20px]" viewBox="0 0 20 20" fill="none" stroke="#a08a8a"><path d="M4 7c0-5 7-5 8 0" stroke-width="2"/><circle cx="12" cy="13" r="5"/><path d="M12 6v14M5 13h14"/></svg></div>
        <div class="w-[6px] h-[24px] border-l-2 border-[#eee]"></div>
        <div class="w-[24px] flex justify-center"><svg class="w-[20px] h-[20px]" viewBox="0 0 20 20" fill="none"><path d="M3 3h15v14H3z" stroke="#8a7a7a" stroke-dasharray="2 2"/></svg></div>
        <div class="w-[12px] flex justify-center"><i class="border-x-[3px] border-t-[4px] border-x-transparent border-t-black"></i></div>
        <div class="w-[4px] h-[24px] border-l-2 border-[#eee]"></div>
        <div class="w-[23px] flex justify-center"><svg class="w-[20px] h-[20px]" viewBox="0 0 20 20"><path d="M2 9l12-6 4 3v5L6 17l-4-3z" fill="#eee" stroke="#444"/><path d="M6 8l7-3" stroke="#d04040"/></svg></div>
        <div class="w-[23px] flex justify-center"><svg class="w-[20px] h-[20px]" viewBox="0 0 20 20"><path d="M2 6l7-4 9 3v10l-8 4-8-4z" fill="#4aa4ec"/><path d="M2 6l8 3 8-4-8-3z" fill="#a8d4f8" stroke="#d8a0b0"/><path d="M10 9v10" stroke="#2a78c8"/></svg></div>
        <div class="w-[5px] h-[24px] border-l-2 border-[#eee]"></div>
        <div class="flex gap-[1px]">
            <div class="w-[23px] h-[23px] rounded-[2px] border border-[#777] bg-white flex items-center justify-center"><svg class="w-[18px] h-[18px]" viewBox="0 0 18 18"><path d="M1 3l3 2-3 2z" fill="#18a838"/><path d="M1 11l3 2-3 2z" fill="#d81818"/><path d="M10 2l6 7-6 7-5-7z" fill="none" stroke="#555" stroke-dasharray="2 1"/><circle cx="10" cy="9" r="2.500" fill="#f0c820"/><circle cx="10" cy="2" r="1.500" fill="#222"/><circle cx="16" cy="9" r="1.500" fill="#222"/><circle cx="10" cy="16" r="1.500" fill="#222"/><circle cx="5" cy="9" r="1.500" fill="#222"/></svg></div>
            <div class="w-[22px] h-[23px] flex items-center justify-center"><svg class="w-[18px] h-[18px]" viewBox="0 0 18 18"><circle cx="8" cy="7" r="2" fill="#f0c820"/><path d="M8 1v3M8 10v3M2 7h3M11 7h3" stroke="#222" stroke-width="2"/><path d="M7 15c4 2 8 0 9-4" fill="none" stroke="#2a90a0" stroke-width="2"/></svg></div>
            <div class="w-[23px] h-[23px] rounded-[2px] border border-[#777] bg-white flex items-center justify-center"><svg class="w-[18px] h-[18px]" viewBox="0 0 18 18"><path d="M2 16L16 2" stroke="#333"/><circle cx="2.500" cy="15.500" r="1.500" fill="#d81818"/><circle cx="15.500" cy="2.500" r="1.500" fill="#d81818"/></svg></div>
            <div class="w-[23px] h-[23px] rounded-[2px] border border-[#777] bg-white flex items-center justify-center"><svg class="w-[18px] h-[18px]" viewBox="0 0 18 18"><path d="M2 2c7 0 3 14 14 14" fill="none" stroke="#222" stroke-width="1.300"/><circle cx="7" cy="8" r="1.600" fill="#d81818"/></svg></div>
            <div class="w-[23px] h-[23px] rounded-[2px] border border-[#777] bg-white flex items-center justify-center"><svg class="w-[18px] h-[18px]" viewBox="0 0 18 18"><circle cx="9" cy="9" r="7.500" fill="none" stroke="#222" stroke-width="1.300"/><circle cx="9" cy="9" r="2" fill="#d81818"/></svg></div>
            <div class="w-[23px] h-[23px] rounded-[2px] border border-[#777] bg-white flex items-center justify-center"><svg class="w-[18px] h-[18px]" viewBox="0 0 18 18"><path d="M9 2v14M2 9h14" stroke="#111" stroke-width="1.300"/><circle cx="9" cy="9" r="1.500" fill="#d81818"/></svg></div>
        </div>
    </div>

    <!-- network meter -->
    <div class="absolute left-[1245px] top-[689px] w-[115px] h-[39px] rounded-l-[20px] rounded-r-[18px] border border-[#999] bg-[linear-gradient(#fafafa,#dcdcdc)] flex items-center">
        <div class="w-[38px] h-[38px] -ml-px rounded-full border border-[#3a7a20] bg-[radial-gradient(circle_at_50%_70%,#8ad040,#2a8a20_75%)] text-white text-[12px] flex items-center justify-center">71%</div>
        <div class="w-[44px] ml-[1px] text-[10px] leading-[13px] text-[#111] font-['Liberation_Sans',sans-serif]">
            <div class="flex items-center justify-between w-[43px]"><i class="border-x-[4px] border-b-[6px] border-x-transparent border-b-[#e02020]"></i><span>0.08K/s</span></div>
            <div class="flex items-center justify-between w-[43px]"><i class="border-x-[4px] border-t-[6px] border-x-transparent border-t-[#4a9a30]"></i><span>0.3K/s</span></div>
        </div>
        <div class="ml-[6px] w-[18px] h-[18px] rounded-full bg-[radial-gradient(circle_at_50%_50%,#d0f070,#50a010_75%)] flex items-center justify-center"><i class="ml-[2px] border-y-[4px] border-l-[6px] border-y-transparent border-l-white"></i></div>
    </div>
</body>
</html>
